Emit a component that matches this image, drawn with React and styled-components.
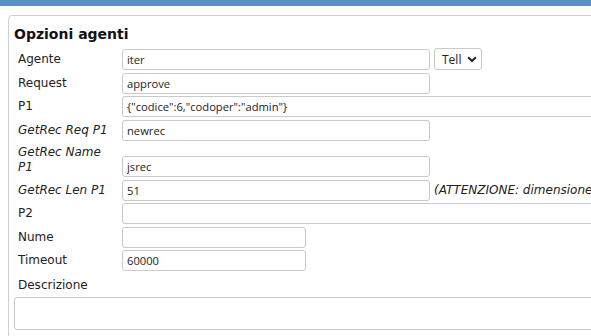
import React from "react";
import styled, { createGlobalStyle } from "styled-components";

const Global = createGlobalStyle`
  html, body {
    margin: 0;
    padding: 0;
    background: #ffffff;
    overflow: hidden;
  }
  body {
    font-family: "DejaVu Sans", Verdana, sans-serif;
    font-size: 12px;
    color: #222;
  }
`;

const TopBar = styled.div`
  height: 6px;
  background: #5b8fc9;
`;

const Panel = styled.section`
  margin: 9px 0 0 8px;
  width: 820px;
  border: 1px solid #cfcfcf;
  border-radius: 4px;
  padding: 10px 5px 8px;
  box-sizing: border-box;
`;

const Title = styled.h2`
  margin: 0 0 5px;
  font-family: "DejaVu Sans", Verdana, sans-serif;
  font-size: 14px;
  font-weight: bold;
  line-height: 17px;
  color: #111;
`;

const Form = styled.div`
  display: flex;
  flex-direction: column;
  gap: 2.5px;
`;

const Row = styled.div`
  display: flex;
  align-items: ${(p) => (p.$wrap ? "last baseline" : "center")};
`;

const Label = styled.label`
  flex: 0 0 108px;
  box-sizing: border-box;
  padding: 2px 4px;
  line-height: 15px;
  font-style: ${(p) => (p.$italic ? "italic" : "normal")};
`;

const BlockLabel = styled.label`
  display: block;
  margin-top: 2px;
  padding: 2px 4px;
  line-height: 15px;
`;

const Input = styled.input`
  box-sizing: border-box;
  width: ${(p) => p.$w}px;
  height: 21px;
  margin: 0;
  padding: 0 4px;
  border: 1px solid #c9c9c9;
  border-radius: 3px;
  background: #fff;
  font-family: "Open Sans", "Noto Sans", sans-serif;
  font-size: 11.2px;
  color: #222;
  outline: none;
`;

const SelectBox = styled.div`
  box-sizing: border-box;
  margin-left: 4px;
  width: 48px;
  height: 22px;
  border: 1px solid #c9c9c9;
  border-radius: 3px;
  background: #fff;
  display: flex;
  align-items: center;
  justify-content: space-between;
  padding: 0 4px 0 7px;
  font-family: "Open Sans", "Noto Sans", sans-serif;
  font-size: 12px;
  color: #222;
`;

const Note = styled.span`
  margin-left: 4px;
  white-space: nowrap;
  font-style: italic;
`;

const TextArea = styled.textarea`
  display: block;
  box-sizing: border-box;
  width: 100%;
  height: 33px;
  margin: 0;
  border: 1px solid #c9c9c9;
  border-radius: 3px;
  resize: none;
  font-family: "Open Sans", "Noto Sans", sans-serif;
  font-size: 11.2px;
  outline: none;
`;

const Chevron = () => (
  <svg width="10" height="7" viewBox="0 0 10 7">
    <path d="M1.2 1.3 L5 5 L8.8 1.3" fill="none" stroke="#222" strokeWidth="2" strokeLinejoin="miter" />
  </svg>
);

const fields = [
  { label: "Request", value: "approve", w: 308 },
  { label: "P1", value: '{"codice":6,"codoper":"admin"}', w: 620 },
  { label: "GetRec Req P1", value: "newrec", w: 308, italic: true },
  { label: "GetRec Name P1", value: "jsrec", w: 308, italic: true, wrap: true },
  {
    label: "GetRec Len P1",
    value: "51",
    w: 308,
    italic: true,
    note: "(ATTENZIONE: dimensione massima del record in byte)",
  },
  { label: "P2", value: "", w: 620 },
  { label: "Nume", value: "", w: 184 },
  { label: "Timeout", value: "60000", w: 184 },
];

export default function App() {
  return (
    <>
      <Global />
      <TopBar />
      <Panel>
        <Title>Opzioni agenti</Title>
        <Form>
          <Row>
            <Label>Agente</Label>
            <Input $w={308} defaultValue="iter" />
            <SelectBox>
              <span>Tell</span>
              <Chevron />
            </SelectBox>
          </Row>
          {fields.map((f) => (
            <Row key={f.label} $wrap={f.wrap}>
              <Label $italic={f.italic}>{f.label}</Label>
              <Input $w={f.w} defaultValue={f.value} />
              {f.note && <Note>{f.note}</Note>}
            </Row>
          ))}
          <BlockLabel>Descrizione</BlockLabel>
          <TextArea />
        </Form>
      </Panel>
    </>
  );
}
